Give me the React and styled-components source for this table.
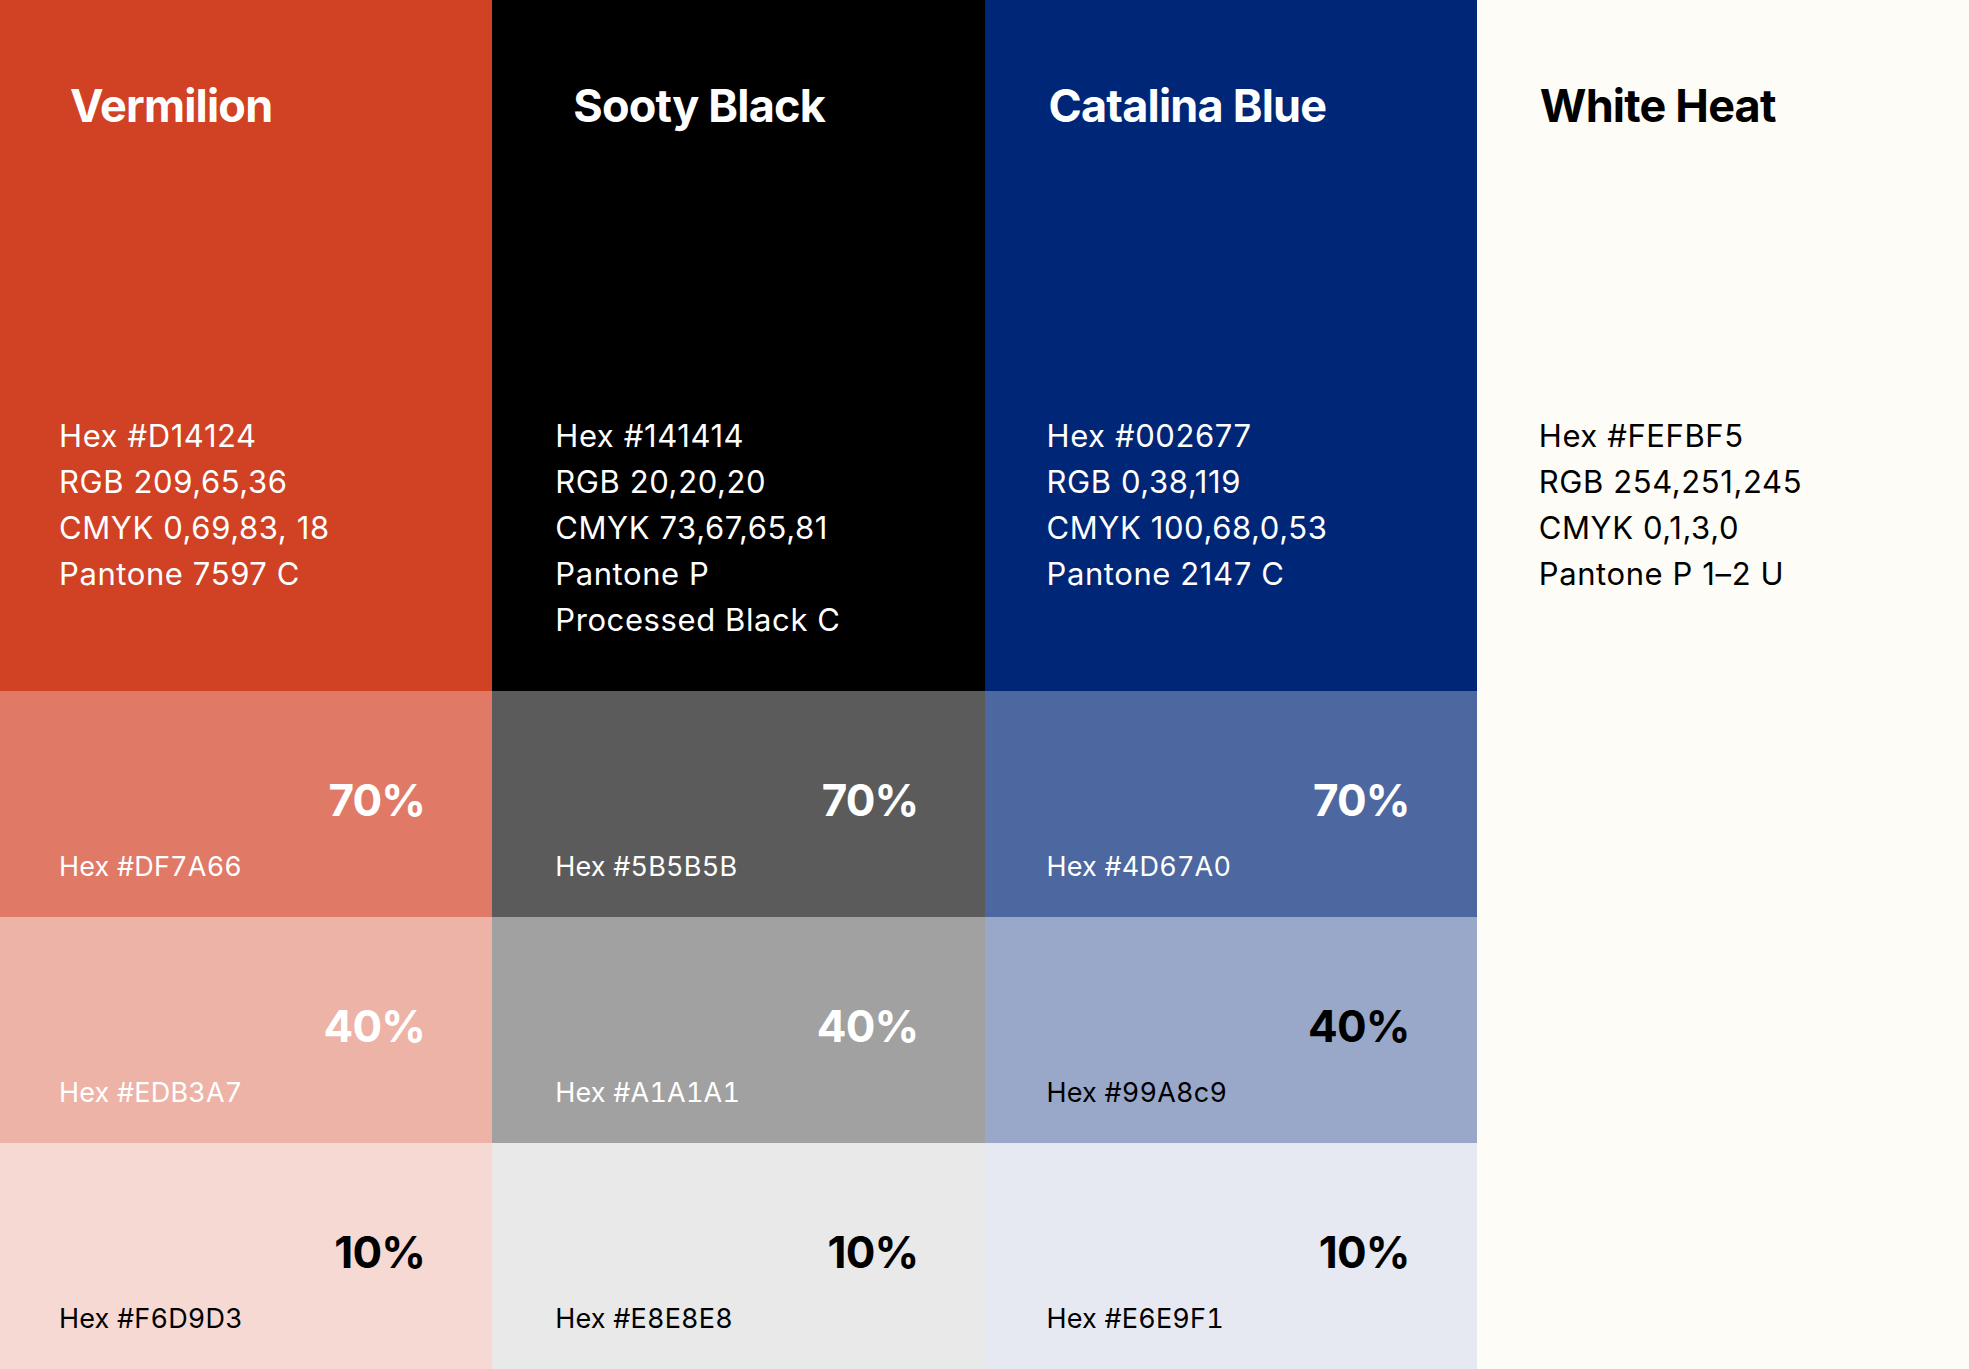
import styled, { createGlobalStyle } from 'styled-components';

const GlobalStyle = createGlobalStyle`
  html, body, #root {
    margin: 0;
    padding: 0;
    height: 100%;
  }
  body {
    font-family: Inter, 'Liberation Sans', sans-serif;
    background: #fdfcf7;
  }
`;

const Board = styled.div`
  display: grid;
  grid-template-columns: repeat(4, 1fr);
  height: 100vh;
  min-height: 1369px;
`;

const Column = styled.div`
  display: flex;
  flex-direction: column;
  min-width: 0;
`;

const Main = styled.div`
  flex: 1;
  background: ${(p) => p.$bg};
  color: ${(p) => p.$fg};
  padding-top: 83px;
  box-sizing: border-box;
`;

const Title = styled.h2`
  margin: 0 0 0 ${(p) => p.$indent}px;
  font-size: 45px;
  line-height: 1;
  font-weight: 700;
  letter-spacing: -0.8px;
`;

const Info = styled.div`
  margin: 285px 0 0 ${(p) => p.$indent}px;
  font-size: 31px;
  line-height: 46px;
  font-weight: 400;
  letter-spacing: 0.6px;
`;

const Tint = styled.div`
  height: 226px;
  box-sizing: border-box;
  background: ${(p) => p.$bg};
  display: flex;
  flex-direction: column;
  padding: 87px ${(p) => p.$right}px 0 ${(p) => p.$indent}px;
`;

const Percent = styled.div`
  align-self: flex-end;
  font-size: 44px;
  line-height: 1;
  font-weight: 700;
  letter-spacing: -0.8px;
  color: ${(p) => p.$fg};
`;

const TintHex = styled.div`
  margin-top: 31px;
  font-size: 27px;
  line-height: 1;
  letter-spacing: 0.2px;
  font-feature-settings: 'tnum' 1;
  color: ${(p) => p.$fg};
`;

const swatches = [
  {
    name: 'Vermilion',
    bg: '#d14124',
    fg: '#ffffff',
    titleIndent: 70,
    indent: 59,
    right: 67,
    info: ['Hex #D14124', 'RGB 209,65,36', 'CMYK 0,69,83, 18', 'Pantone 7597 C'],
    tints: [
      { pct: '70%', hex: '#DF7A66', bg: '#e07a67', pctFg: '#fff', hexFg: '#fff' },
      { pct: '40%', hex: '#EDB3A7', bg: '#edb3a7', pctFg: '#fff', hexFg: '#fff' },
      { pct: '10%', hex: '#F6D9D3', bg: '#f6d9d3', pctFg: '#000', hexFg: '#000' },
    ],
  },
  {
    name: 'Sooty Black',
    bg: '#000000',
    fg: '#ffffff',
    titleIndent: 81,
    indent: 63,
    right: 66,
    info: ['Hex #141414', 'RGB 20,20,20', 'CMYK 73,67,65,81', 'Pantone P', 'Processed Black C'],
    tints: [
      { pct: '70%', hex: '#5B5B5B', bg: '#5b5b5b', pctFg: '#fff', hexFg: '#fff' },
      { pct: '40%', hex: '#A1A1A1', bg: '#a1a1a1', pctFg: '#fff', hexFg: '#fff' },
      { pct: '10%', hex: '#E8E8E8', bg: '#e9e9e9', pctFg: '#000', hexFg: '#000' },
    ],
  },
  {
    name: 'Catalina Blue',
    bg: '#002677',
    fg: '#ffffff',
    titleIndent: 64,
    indent: 62,
    right: 67,
    info: ['Hex #002677', 'RGB 0,38,119', 'CMYK 100,68,0,53', 'Pantone 2147 C'],
    tints: [
      { pct: '70%', hex: '#4D67A0', bg: '#4d67a0', pctFg: '#fff', hexFg: '#fff' },
      { pct: '40%', hex: '#99A8c9', bg: '#99a8c9', pctFg: '#000', hexFg: '#000' },
      { pct: '10%', hex: '#E6E9F1', bg: '#e7e9f2', pctFg: '#000', hexFg: '#000' },
    ],
  },
  {
    name: 'White Heat',
    bg: '#fdfcf7',
    fg: '#000000',
    titleIndent: 63,
    indent: 62,
    info: ['Hex #FEFBF5', 'RGB 254,251,245', 'CMYK 0,1,3,0', 'Pantone P 1–2 U'],
    tints: [],
  },
];

export default function App() {
  return (
    <>
      <GlobalStyle />
      <Board>
        {swatches.map((s) => (
          <Column key={s.name}>
            <Main $bg={s.bg} $fg={s.fg}>
              <Title $indent={s.titleIndent}>{s.name}</Title>
              <Info $indent={s.indent}>
                {s.info.map((line) => (
                  <div key={line}>{line}</div>
                ))}
              </Info>
            </Main>
            {s.tints.map((t) => (
              <Tint key={t.pct} $bg={t.bg} $indent={s.indent} $right={s.right}>
                <Percent $fg={t.pctFg}>{t.pct}</Percent>
                <TintHex $fg={t.hexFg}>Hex {t.hex}</TintHex>
              </Tint>
            ))}
          </Column>
        ))}
      </Board>
    </>
  );
}
